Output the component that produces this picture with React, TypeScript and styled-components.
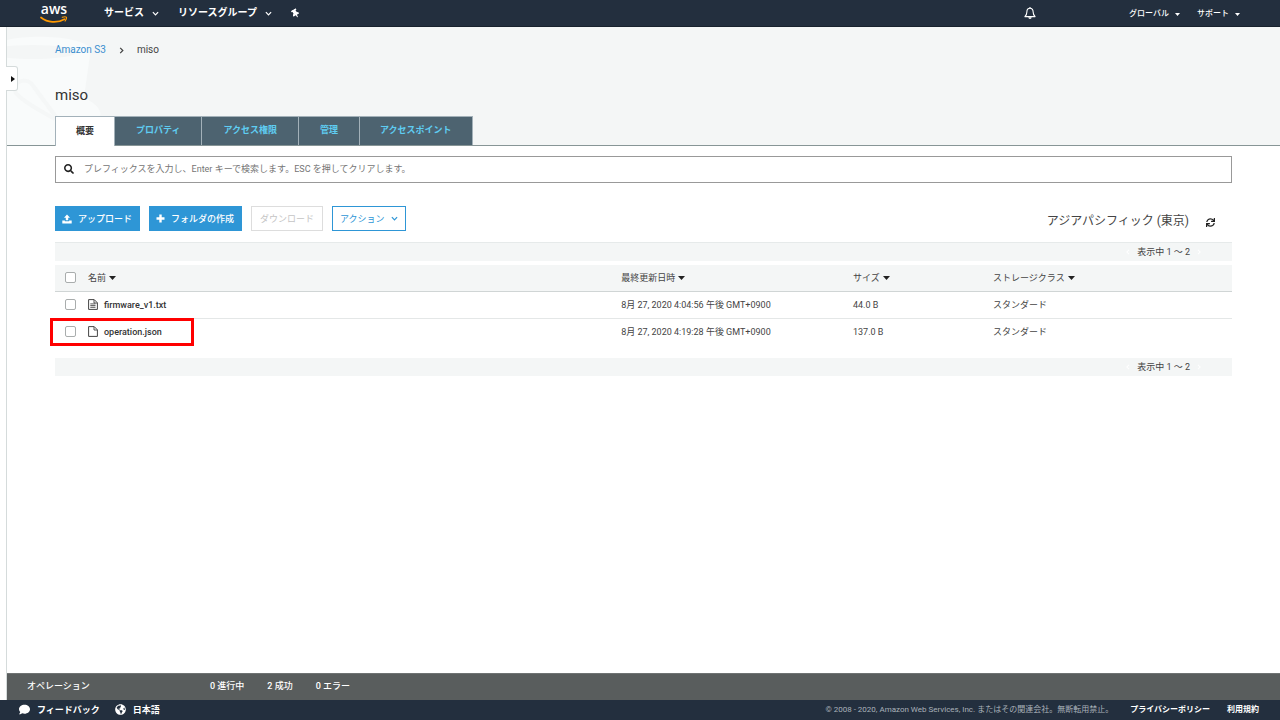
import React from "react";
import styled, { createGlobalStyle, css } from "styled-components";
import {
  FaComment,
  FaGlobeAmericas,
  FaSearch,
  FaSync,
  FaThumbtack,
} from "react-icons/fa";

const GlobalStyle = createGlobalStyle`
  *, *::before, *::after { box-sizing: border-box; }
  body {
    margin: 0;
    background: #fff;
    color: #444;
    font-family: Roboto, "Noto Sans CJK JP", sans-serif;
    font-size: 9px;
    line-height: 14px;
  }
  button, input { font: inherit; color: inherit; }
  a { color: inherit; text-decoration: none; }
`;

const Page = styled.div`
  display: flex;
  flex-direction: column;
  min-height: 100vh;
`;

const TopBar = styled.header`
  display: flex;
  align-items: center;
  height: 27px;
  padding: 0 40px;
  background: #232f3e;
  border-bottom: 1px solid #18222d;
  color: #fff;
`;

const Logo = styled.a`
  display: flex;
  flex-direction: column;
  align-items: center;
  width: 28px;
  height: 22px;
  margin-right: 36px;
  font-family: "Open Sans", sans-serif;
  font-size: 14px;
  font-weight: 600;
  line-height: 14px;
  svg { flex: none; }
`;

const NavButton = styled.button<{ $small?: boolean }>`
  display: flex;
  align-items: center;
  gap: ${(p) => (p.$small ? 6 : 8)}px;
  padding: ${(p) => (p.$small ? "2px 0 0" : "0")};
  border: 0;
  background: none;
  color: #fff;
  font-size: ${(p) => (p.$small ? 8 : 10)}px;
  font-weight: ${(p) => (p.$small ? 500 : 700)};
  white-space: nowrap;
  cursor: pointer;
`;

const NavGroup = styled.nav<{ $gap: number }>`
  display: flex;
  align-items: center;
  gap: ${(p) => p.$gap}px;
`;

const PinIcon = styled(FaThumbtack)`
  transform: rotate(-30deg);
`;

const RightGroup = styled(NavGroup)`
  margin-left: auto;
`;

const BellButton = styled(NavButton)`
  margin-right: 76px;
`;

const Body = styled.div`
  display: flex;
  flex: 1;
`;

const SideRail = styled.aside`
  position: relative;
  flex: none;
  width: 7px;
  border-right: 1px solid #d5dbdb;
`;

const RailToggle = styled.button`
  position: absolute;
  z-index: 1;
  top: 39px;
  left: 6px;
  display: flex;
  align-items: center;
  justify-content: center;
  width: 12px;
  height: 25px;
  padding: 0 0 0 2px;
  border: 1px solid #d5dbdb;
  border-left: 0;
  border-radius: 0 3px 3px 0;
  background: #fff;
  cursor: pointer;
`;

const Main = styled.main`
  display: flex;
  flex: 1;
  flex-direction: column;
  min-width: 0;
`;

const BucketHead = styled.section`
  position: relative;
  height: 119px;
  padding: 16px 48px 0;
  border-bottom: 1px solid #879596;
  background: #f4f6f6;
`;

const BucketArt = styled.svg`
  position: absolute;
  top: 0;
  left: 0;
`;

const HeadContent = styled.div`
  position: relative;
  display: flex;
  flex-direction: column;
  height: 100%;
`;

const Breadcrumb = styled.nav`
  display: flex;
  align-items: center;
  gap: 12px;
  font-size: 10px;
  line-height: 14px;
  a { color: #3b8fd0; }
`;

const Title = styled.h1`
  margin: 28px 0 0;
  color: #333;
  font-size: 15px;
  font-weight: 400;
  line-height: 20px;
`;

const Tabs = styled.div`
  display: flex;
  height: 30px;
  margin: auto 0 -1px;
`;

const Tab = styled.button<{ $active?: boolean }>`
  height: 29px;
  padding: 0 21px 2px;
  border: 1px solid #a3b1b9;
  border-width: 1px 1px 0 0;
  background: #4d6370;
  color: #5fcdf2;
  font-weight: 700;
  white-space: nowrap;
  cursor: pointer;
  &:last-child { padding: 0 20px 2px; }
  ${(p) =>
    p.$active &&
    css`
      height: 30px;
      padding: 0 20px 2px;
      border-left-width: 1px;
      background: #fff;
      color: #333;
    `}
`;

const Content = styled.section`
  padding: 10px 48px 0;
`;

const SearchBox = styled.label`
  display: flex;
  align-items: center;
  gap: 10px;
  height: 27px;
  padding: 0 8px 2px;
  border: 1px solid #999;
  color: #222;
  input {
    flex: 1;
    min-width: 0;
    padding: 0;
    border: 0;
    outline: 0;
    background: none;
  }
  input::placeholder { color: #757575; opacity: 1; }
`;

const Toolbar = styled.div`
  display: flex;
  align-items: center;
  gap: 9px;
  margin: 23px 0 11px;
`;

const Button = styled.button<{ $kind: "primary" | "outline" | "disabled" }>`
  display: flex;
  align-items: center;
  gap: 6px;
  height: 25px;
  padding: 0 7px 0 6px;
  border: 1px solid #2e96d6;
  background: #2e96d6;
  color: #fff;
  font-weight: 500;
  white-space: nowrap;
  cursor: pointer;
  ${(p) =>
    p.$kind === "outline" &&
    css`
      padding: 0 7px;
      background: #fff;
      color: #2e96d6;
      font-weight: 400;
    `}
  ${(p) =>
    p.$kind === "disabled" &&
    css`
      padding: 0 8px;
      border-color: #ddd;
      background: #fff;
      color: #c4c4c4;
      font-weight: 400;
    `}
`;

const Region = styled.span`
  margin-left: auto;
  padding-top: 4px;
  font-size: 12px;
  line-height: 18px;
`;

const RefreshButton = styled.button`
  display: flex;
  margin: 7px 17px 0 8px;
  padding: 0;
  border: 0;
  background: none;
  color: #222;
  cursor: pointer;
`;

const Pager = styled.div<{ $top?: boolean }>`
  display: flex;
  align-items: center;
  justify-content: flex-end;
  gap: 6px;
  height: 19px;
  margin: ${(p) => (p.$top ? "0 0 4px" : "12px 0 0")};
  padding-right: 30px;
  border-top: 1px solid ${(p) => (p.$top ? "#e6eaea" : "#fff")};
  background: #f4f6f6;
  svg { color: #fff; }
`;

const ObjectTable = styled.table`
  width: 100%;
  table-layout: fixed;
  border-collapse: collapse;
  th, td {
    height: 27px;
    padding: 0;
    font-weight: 400;
    text-align: left;
    white-space: nowrap;
  }
  th { height: 26px; }
  thead tr { background: #f4f6f6; border-bottom: 1px solid #d0d5d5; }
  tbody tr + tr { border-top: 1px solid #e4e7e7; }
`;

const Col = styled.col<{ $w: string }>`
  width: ${(p) => p.$w};
`;

const NameCell = styled.div`
  position: relative;
  display: flex;
  align-items: center;
  height: 25px;
  padding-left: 10px;
`;

const Check = styled.input`
  appearance: none;
  flex: none;
  width: 11px;
  height: 11px;
  margin: 0 12px 0 0;
  border: 1px solid #a9adad;
  border-radius: 2px;
  background: #fff;
`;

const SortButton = styled.button`
  display: inline-flex;
  align-items: center;
  gap: 3px;
  padding: 0;
  border: 0;
  background: none;
  cursor: pointer;
  svg { color: #222; }
`;

const FileLink = styled.a`
  display: flex;
  align-items: center;
  gap: 6px;
  color: #333;
  font-weight: 500;
`;

const Highlight = styled.span`
  position: absolute;
  top: -1px;
  left: -5px;
  width: 144px;
  height: 28px;
  border: 3px solid #f00;
  pointer-events: none;
`;

const Operations = styled.section`
  display: flex;
  align-items: center;
  gap: 23px;
  height: 27px;
  margin-top: auto;
  padding: 0 20px 2px;
  border-top: 1px solid #6f7373;
  background: #595d5d;
  color: #fff;
  font-weight: 500;
`;

const OperationsTitle = styled.span`
  width: 160px;
`;

const Footer = styled.footer`
  display: flex;
  align-items: center;
  gap: 15px;
  height: 20px;
  padding: 0 21px 1px 19px;
  background: #232f3e;
  color: #fff;
  font-weight: 700;
`;

const FooterLink = styled.a<{ $small?: boolean }>`
  display: flex;
  align-items: center;
  gap: 7px;
  font-size: ${(p) => (p.$small ? 8 : 9)}px;
  white-space: nowrap;
`;

const Legal = styled.div`
  display: flex;
  align-items: center;
  gap: 17px;
  margin-left: auto;
  font-size: 8px;
  white-space: nowrap;
`;

const Copyright = styled.span`
  color: #aab2ba;
  font-weight: 400;
`;

const Chevron = ({ size = 7, dir = "down" }: { size?: number; dir?: "down" | "right" | "left" }) => (
  <svg width={size} height={size} viewBox="0 0 8 8" fill="none" stroke="currentColor" strokeWidth="1.4" aria-hidden="true">
    <path d={dir === "down" ? "M1 2.5 4 5.5 7 2.5" : dir === "right" ? "M2.5 1 5.5 4 2.5 7" : "M5.5 1 2.5 4 5.5 7"} />
  </svg>
);

const Caret = ({ width = 7 }: { width?: number }) => (
  <svg width={width} height={width > 5 ? 4 : 3} viewBox="0 0 8 5" preserveAspectRatio="none" fill="currentColor" aria-hidden="true">
    <path d="M0 0h8L4 5z" />
  </svg>
);

const Bell = () => (
  <svg width="12" height="13" viewBox="0 0 12 13" fill="none" stroke="#fff" strokeWidth="1.1" aria-hidden="true">
    <path d="M6 1.3C3.8 1.3 2.9 3 2.9 4.8c0 2.600-.7 3.600-2 4.800h10.200c-1.300-1.200-2-2.200-2-4.800C9.100 3 8.200 1.300 6 1.300z" strokeLinejoin="round" />
    <path d="M4.300 10.300h3.400c-.2 1-.8 1.600-1.700 1.600s-1.500-.6-1.700-1.600z" fill="#fff" stroke="none" />
    <path d="M6 0v1.400" />
  </svg>
);

const UploadIcon = () => (
  <svg width="10" height="10" viewBox="0 0 10 10" fill="currentColor" aria-hidden="true">
    <path d="M5 .5 8 3.800H6.200V6.300H3.800V3.800H2z" />
    <path d="M.3 6.500h2.600v.8h4.200v-.8h2.600v3H.3z" />
  </svg>
);

const PlusIcon = () => (
  <svg width="9" height="9" viewBox="0 0 9 9" fill="currentColor" aria-hidden="true">
    <path d="M3.300.5h2.400v2.800h2.800v2.400H5.700v2.800H3.300V5.700H.5V3.300h2.800z" />
  </svg>
);

const FileIcon = ({ lines }: { lines?: boolean }) => (
  <svg width="10" height="11" viewBox="0 0 10 11" fill="none" stroke="#444" aria-hidden="true">
    <path d="M.6.6h5.600l3.200 3.200v6.600H.6z" />
    <path d="M6 .8v3.200h3.200" strokeWidth=".9" />
    {lines && <path d="M2.300 4.900h5.200M2.300 6.600h5.200M2.300 8.300h5.200" strokeWidth=".9" />}
  </svg>
);

const files = [
  { name: "firmware_v1.txt", lines: true, date: "8月 27, 2020 4:04:56 午後 GMT+0900", size: "44.0 B" },
  { name: "operation.json", date: "8月 27, 2020 4:19:28 午後 GMT+0900", size: "137.0 B", marked: true },
];

const PagerBand = ({ top }: { top?: boolean }) => (
  <Pager $top={top}>
    <Chevron size={6} dir="left" />
    <span>表示中 1 ～ 2</span>
    <Chevron size={6} dir="right" />
  </Pager>
);

export default function App() {
  return (
    <Page lang="ja">
      <GlobalStyle />
      <TopBar>
        <Logo href="#">
          aws
          <svg width="28" height="8" viewBox="0 0 28 8" fill="none" stroke="#f90" aria-hidden="true">
            <path d="M1 1.500C7.500 6.600 17 7.500 24.500 3.200" strokeWidth="1.700" strokeLinecap="round" />
            <path d="M22.300 1.300c1.800-.6 3.500-.6 4-.1.400.6-.1 2.300-1.200 3.800" strokeWidth="1.200" strokeLinecap="round" />
          </svg>
        </Logo>
        <NavGroup $gap={19}>
          <NavButton>サービス <Chevron /></NavButton>
          <NavButton>リソースグループ <Chevron /></NavButton>
          <NavButton aria-label="ピン留め"><PinIcon size={9} /></NavButton>
        </NavGroup>
        <RightGroup $gap={17}>
          <BellButton aria-label="通知"><Bell /></BellButton>
          <NavButton $small>グローバル <Caret width={5} /></NavButton>
          <NavButton $small>サポート <Caret width={5} /></NavButton>
        </RightGroup>
      </TopBar>

      <Body>
        <SideRail>
          <RailToggle aria-label="メニューを開く">
            <svg width="4" height="6" viewBox="0 0 4 6" aria-hidden="true"><path d="M0 0v6l4-3z" fill="#111" /></svg>
          </RailToggle>
        </SideRail>
        <Main>
          <BucketHead>
            <BucketArt width="110" height="118" viewBox="0 0 110 118" aria-hidden="true">
              <path d="M0 13C25 7 72 9 84 21L77 70c14 8 18 14 16 19H48v29H0z" fill="#f9fbfb" />
              <ellipse cx="26" cy="25" rx="44" ry="7" fill="#f4f6f6" />
              <path d="M52 94 24 56C16 50 6 56 8 64c1 6 22 18 40 28" fill="none" stroke="#f5f7f7" strokeWidth="4" />
            </BucketArt>
            <HeadContent>
              <Breadcrumb aria-label="パンくずリスト">
                <a href="#">Amazon S3</a>
                <Chevron dir="right" />
                <span>miso</span>
              </Breadcrumb>
              <Title>miso</Title>
              <Tabs role="tablist">
                <Tab role="tab" aria-selected $active>概要</Tab>
                <Tab role="tab">プロパティ</Tab>
                <Tab role="tab">アクセス権限</Tab>
                <Tab role="tab">管理</Tab>
                <Tab role="tab">アクセスポイント</Tab>
              </Tabs>
            </HeadContent>
          </BucketHead>

          <Content>
            <SearchBox>
              <FaSearch size={10} />
              <input
                type="text"
                aria-label="検索"
                placeholder="プレフィックスを入力し、Enter キーで検索します。ESC を押してクリアします。"
              />
            </SearchBox>
            <Toolbar>
              <Button $kind="primary"><UploadIcon />アップロード</Button>
              <Button $kind="primary"><PlusIcon />フォルダの作成</Button>
              <Button $kind="disabled" disabled>ダウンロード</Button>
              <Button $kind="outline">アクション <Chevron /></Button>
              <Region>アジアパシフィック (東京)</Region>
              <RefreshButton aria-label="更新"><FaSync size={9} /></RefreshButton>
            </Toolbar>

            <PagerBand top />
            <ObjectTable>
              <colgroup>
                <Col $w="48.1%" />
                <Col $w="19.7%" />
                <Col $w="11.9%" />
                <Col $w="20.3%" />
              </colgroup>
              <thead>
                <tr>
                  <th>
                    <NameCell>
                      <Check type="checkbox" aria-label="すべて選択" />
                      <SortButton>名前<Caret /></SortButton>
                    </NameCell>
                  </th>
                  <th><SortButton>最終更新日時<Caret /></SortButton></th>
                  <th><SortButton>サイズ<Caret /></SortButton></th>
                  <th><SortButton>ストレージクラス<Caret /></SortButton></th>
                </tr>
              </thead>
              <tbody>
                {files.map(({ name, lines, date, size, marked }) => (
                  <tr key={name}>
                    <td>
                      <NameCell>
                        <Check type="checkbox" aria-label={name} />
                        <FileLink href="#"><FileIcon lines={lines} />{name}</FileLink>
                        {marked && <Highlight />}
                      </NameCell>
                    </td>
                    <td>{date}</td>
                    <td>{size}</td>
                    <td>スタンダード</td>
                  </tr>
                ))}
              </tbody>
            </ObjectTable>
            <PagerBand />
          </Content>

          <Operations>
            <OperationsTitle>オペレーション</OperationsTitle>
            <span>0 進行中</span>
            <span>2 成功</span>
            <span>0 エラー</span>
          </Operations>
        </Main>
      </Body>

      <Footer>
        <FooterLink href="#"><FaComment size={11} />フィードバック</FooterLink>
        <FooterLink href="#"><FaGlobeAmericas size={11} />日本語</FooterLink>
        <Legal>
          <Copyright>© 2008 - 2020, Amazon Web Services, Inc. またはその関連会社。無断転用禁止。</Copyright>
          <FooterLink $small href="#">プライバシーポリシー</FooterLink>
          <FooterLink $small href="#">利用規約</FooterLink>
        </Legal>
      </Footer>
    </Page>
  );
}
